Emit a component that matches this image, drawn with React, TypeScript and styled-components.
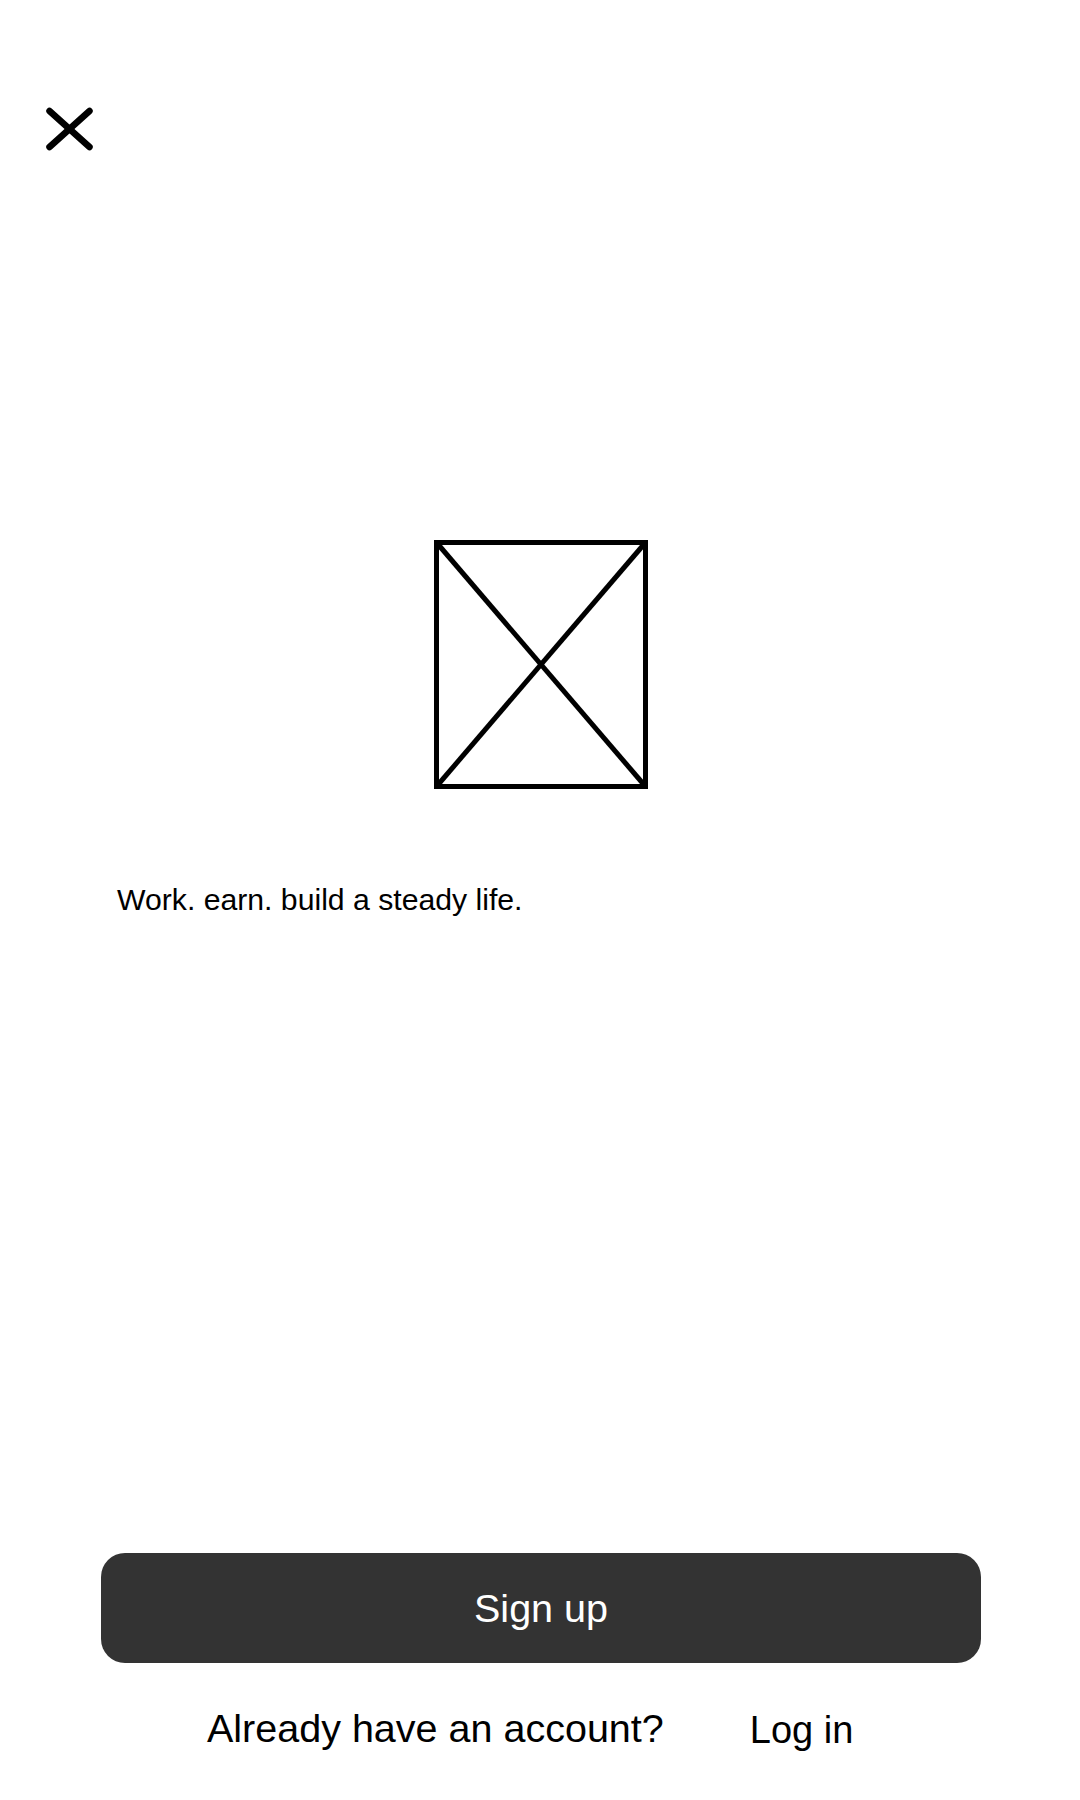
import React from "react";
import styled, { createGlobalStyle } from "styled-components";

const GlobalStyle = createGlobalStyle`
  html, body {
    margin: 0;
    padding: 0;
    background: #fff;
  }
  body {
    font-family: "Liberation Sans", Arial, sans-serif;
    color: #000;
  }
`;

const Page = styled.div`
  min-height: 1800px;
  box-sizing: border-box;
  display: flex;
  flex-direction: column;
  padding-bottom: 47px;
`;

const TopBar = styled.div`
  display: flex;
  padding: 105px 0 0 44px;
`;

const CloseButton = styled.button`
  border: none;
  background: none;
  padding: 0;
  width: 51px;
  height: 49px;
  cursor: pointer;

  svg {
    display: block;
  }
`;

const Placeholder = styled.svg`
  display: block;
  align-self: center;
  margin-top: 386px;
  margin-left: 2px;
`;

const Tagline = styled.p`
  margin: 94px 0 0;
  padding-left: 117px;
  font-size: 30.2px;
  line-height: 1.15;
`;

const Spacer = styled.div`
  flex: 1;
`;

const PrimaryButton = styled.button`
  margin: 0 0 0 101px;
  width: 880px;
  height: 110px;
  border: none;
  border-radius: 24px;
  background: #333333;
  color: #fff;
  font-family: "Liberation Sans", Arial, sans-serif;
  font-size: 39.5px;
  cursor: pointer;
`;

const Footer = styled.div`
  display: flex;
  align-items: flex-start;
  gap: 86px;
  margin-top: 43px;
  padding-left: 207px;
  line-height: 1.15;
`;

const Question = styled.span`
  font-size: 39.5px;
`;

const LinkText = styled.a<{ $offset?: number }>`
  margin-top: ${(p) => p.$offset ?? 0}px;
  font-size: 38px;
  color: #000;
  text-decoration: none;
  cursor: pointer;
`;

export default function App() {
  return (
    <>
      <GlobalStyle />
      <Page>
        <TopBar>
          <CloseButton aria-label="Close">
            <svg width="51" height="49" viewBox="0 0 51 49">
              <g stroke="#000" strokeWidth="6.5" strokeLinecap="round">
                <line x1="5.5" y1="6" x2="45.5" y2="42" />
                <line x1="45.5" y1="6" x2="5.5" y2="42" />
              </g>
            </svg>
          </CloseButton>
        </TopBar>

        <Placeholder width="214" height="249" viewBox="0 0 214 249">
          <g stroke="#000" strokeWidth="5" fill="none">
            <rect x="2.5" y="2.5" width="209" height="244" />
            <line x1="2.5" y1="2.5" x2="211.5" y2="246.5" />
            <line x1="211.5" y1="2.5" x2="2.5" y2="246.5" />
          </g>
        </Placeholder>

        <Tagline>Work. earn. build a steady life.</Tagline>

        <Spacer />

        <PrimaryButton>Sign up</PrimaryButton>

        <Footer>
          <Question>Already have an account?</Question>
          <LinkText $offset={3}>Log in</LinkText>
        </Footer>
      </Page>
    </>
  );
}
